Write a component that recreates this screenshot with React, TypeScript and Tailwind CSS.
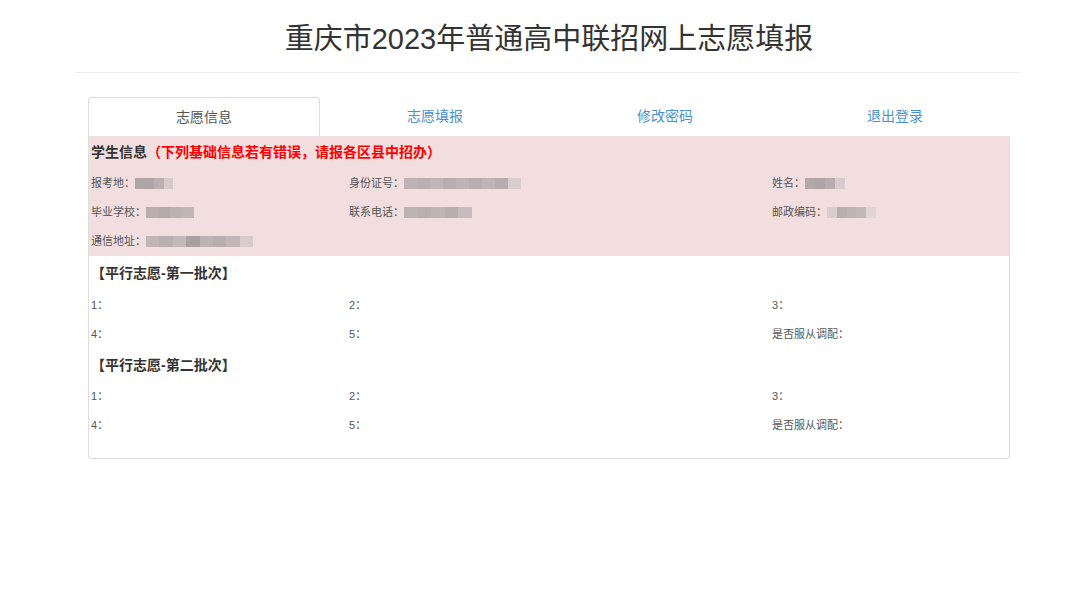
import React from "react";

const font = { fontFamily: '"Liberation Sans", "Noto Sans CJK SC", sans-serif' };

// blurred value placeholder (privacy mosaic)
function Blur({ w, shades }: { w: number; shades: string[] }) {
  return (
    <span className="inline-flex h-[11px] align-middle opacity-90" style={{ width: w }}>
      {shades.map((c, i) => (
        <span key={i} className="h-full flex-1" style={{ background: c }} />
      ))}
    </span>
  );
}

const tabs = ["志愿信息", "志愿填报", "修改密码", "退出登录"];

function Row({ children }: { children: React.ReactNode }) {
  return (
    <div className="grid h-[29px] grid-cols-[258px_423px_1fr] items-center text-[11px] text-[#555]">
      {children}
    </div>
  );
}

function Field({ label, value }: { label: string; value?: React.ReactNode }) {
  return (
    <div className="flex items-center">
      <span>{label}：</span>
      {value}
    </div>
  );
}

function Batch({ title, first }: { title: string; first?: boolean }) {
  return (
    <>
      <div className={`flex items-center text-[14px] font-bold text-[#333] ${first ? "h-[35px]" : "h-[33px]"}`}>
        {title}
      </div>
      <Row>
        <Field label="1" />
        <Field label="2" />
        <Field label="3" />
      </Row>
      <Row>
        <Field label="4" />
        <Field label="5" />
        <Field label="是否服从调配" />
      </Row>
    </>
  );
}

export default function App() {
  return (
    <div className="min-h-screen w-full bg-white pl-[18px]" style={font}>
      <div className="mx-auto w-[946px]">
        <h1 className="flex h-[72px] items-center justify-center pt-[8px] text-[29px] font-normal text-[#333]">
          重庆市2023年普通高中联招网上志愿填报
        </h1>
        <div className="h-px w-full bg-[#eee]" />
      </div>

      <div className="mx-auto mt-[24px] w-[922px]">
        {/* tabs */}
        <div className="flex h-[39px]">
          {tabs.map((t, i) => (
            <div
              key={t}
              className={`flex flex-1 items-center justify-center text-[14px] ${
                i === 0
                  ? "rounded-t-[4px] border border-b-0 border-[#ddd] bg-white text-[#555]"
                  : "text-[#4a90d0]"
              }`}
            >
              {t}
            </div>
          ))}
        </div>

        {/* panel */}
        <div className="rounded-b-[4px] border border-t-0 border-[#ddd] pb-[18px]">
          <div className="bg-[#f2dede] px-[2px]">
            <div className="flex h-[33px] items-center text-[14px] font-bold">
              <span className="text-[#333]">学生信息</span>
              <span className="text-[#ff0000]">（下列基础信息若有错误，请报各区县中招办）</span>
            </div>
            <Row>
              <Field label="报考地" value={<Blur w={38} shades={["#a9a1a3", "#a79fa1", "#b5abad", "#d4c8ca"]} />} />
              <Field label="身份证号" value={<Blur w={117} shades={["#b8aeb0", "#b4aaad", "#bcb1b3", "#b2a8aa", "#b9afb1", "#b3a9ab", "#bbb0b2", "#b1a7a9", "#d8ccce"]} />} />
              <Field label="姓名" value={<Blur w={40} shades={["#aca3a5", "#a89fa1", "#b1a7a9", "#d6cacc"]} />} />
            </Row>
            <Row>
              <Field label="毕业学校" value={<Blur w={48} shades={["#b3a9ab", "#aea4a6", "#b6acae", "#bbb1b3"]} />} />
              <Field label="联系电话" value={<Blur w={68} shades={["#b8aeb0", "#b4aaac", "#bab0b2", "#b2a8aa", "#c3b8ba"]} />} />
              <Field label="邮政编码" value={<Blur w={49} shades={["#d8ccce", "#b4aaac", "#b9afb1", "#bfb4b6", "#e0d4d6"]} />} />
            </Row>
            <Row>
              <Field label="通信地址" value={<Blur w={107} shades={["#bcb1b3", "#b5abad", "#c0b5b7", "#a39a9c", "#b8aeb0", "#b3a9ab", "#bdb2b4", "#d6cacc"]} />} />
              <div />
              <div />
            </Row>
          </div>
          <div className="px-[2px]">
            <Batch title="【平行志愿-第一批次】" first />
            <Batch title="【平行志愿-第二批次】" />
          </div>
        </div>
      </div>
    </div>
  );
}
